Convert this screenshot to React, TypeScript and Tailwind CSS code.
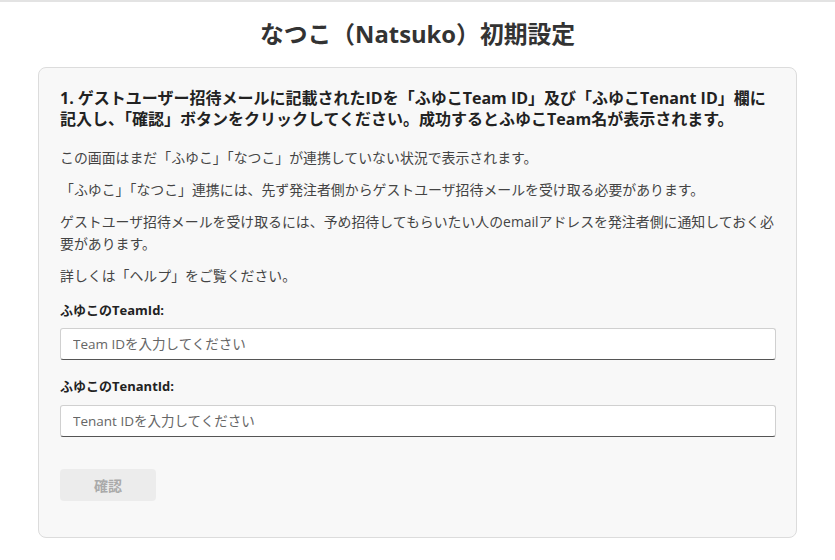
export default function App() {
  const font = { fontFamily: '"Open Sans", "Noto Sans CJK JP", sans-serif' }
  return (
    <div className="min-h-[560px] w-[835px] border-t-2 border-[#e3e3e3] bg-white text-[#333]" style={font}>
      <h1 className="pt-[16px] text-center text-[23.8px] font-bold leading-[32px] text-[#333]">
        なつこ（Natsuko）初期設定
      </h1>

      <div className="mx-[38px] mt-[17px] h-[471px] rounded-lg border border-[#dcdcdc] bg-[#f8f8f8] pl-[21px] pr-[20px] pt-[20px]">
        <p className="text-[16px] font-bold leading-[21px] text-[#222]">
          1. ゲストユーザー招待メールに記載されたIDを「ふゆこTeam ID」及び「ふゆこTenant ID」欄に
          <br />
          記入し、「確認」ボタンをクリックしてください。成功するとふゆこTeam名が表示されます。
        </p>

        <div className="mt-[17px] flex flex-col gap-[10px] text-[13.9px] leading-[22px] text-[#444]">
          <p>この画面はまだ「ふゆこ」「なつこ」が連携していない状況で表示されます。</p>
          <p>「ふゆこ」「なつこ」連携には、先ず発注者側からゲストユーザ招待メールを受け取る必要があります。</p>
          <p>ゲストユーザ招待メールを受け取るには、予め招待してもらいたい人のemailアドレスを発注者側に通知しておく必要があります。</p>
          <p>詳しくは「ヘルプ」をご覧ください。</p>
        </div>

        <label className="mt-[12px] block text-[13px] font-bold leading-[22px] text-[#222]">ふゆこのTeamId:</label>
        <input
          className="mt-[7px] block h-[32px] w-full rounded-[3px] border border-[#d0d0d0] border-b-[#555] bg-white px-[12px] text-[13.5px] text-[#333] placeholder:text-[#666] outline-none"
          placeholder="Team IDを入力してください"
        />

        <label className="mt-[15px] block text-[13px] font-bold leading-[22px] text-[#222]">ふゆこのTenantId:</label>
        <input
          className="mt-[8px] block h-[32px] w-full rounded-[3px] border border-[#d0d0d0] border-b-[#555] bg-white px-[12px] text-[13.5px] text-[#333] placeholder:text-[#666] outline-none"
          placeholder="Tenant IDを入力してください"
        />

        <button
          disabled
          className="mt-[32px] h-[32px] w-[96px] rounded-[4px] bg-[#ececec] text-[14px] font-bold text-[#aaa]"
        >
          確認
        </button>
      </div>
    </div>
  )
}
